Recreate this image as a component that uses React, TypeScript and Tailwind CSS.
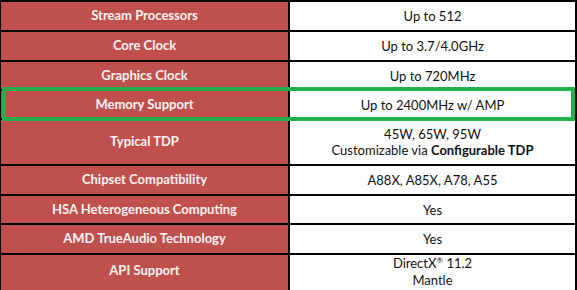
const rows: { label: string; value: React.ReactNode; h: string }[] = [
  { label: "Stream Processors", value: "Up to 512", h: "h-[30px]" },
  { label: "Core Clock", value: "Up to 3.7/4.0GHz", h: "h-[30px]" },
  { label: "Graphics Clock", value: "Up to 720MHz", h: "h-[29px]" },
  { label: "Memory Support", value: "Up to 2400MHz w/ AMP", h: "h-[29px]" },
  {
    label: "Typical TDP",
    value: (
      <>
        <div>45W, 65W, 95W</div>
        <div>
          Customizable via <span className="font-bold">Configurable TDP</span>
        </div>
      </>
    ),
    h: "h-[46px]",
  },
  { label: "Chipset Compatibility", value: "A88X, A85X, A78, A55", h: "h-[30px]" },
  { label: "HSA Heterogeneous Computing", value: "Yes", h: "h-[29px]" },
  { label: "AMD TrueAudio Technology", value: "Yes", h: "h-[30px]" },
];

export default function App() {
  return (
    <div className="relative w-[577px] h-[290px] overflow-hidden bg-white font-['Lato',sans-serif] text-[13px]">
      <div className="w-[577px] border-t-2 border-l border-r-2 border-black">
        {rows.map((r) => (
          <div key={r.label} className={`flex border-b-2 border-black ${r.h}`}>
            <div className="w-[287px] flex items-center justify-center bg-[#c0504d] text-[#fdf3f2] font-bold">
              {r.label}
            </div>
            <div className="w-[2px] bg-black" />
            <div className="flex-1 flex flex-col items-center justify-center text-[#111] leading-[16px] text-center">
              {r.value}
            </div>
          </div>
        ))}
        <div className="flex h-[40px]">
          <div className="w-[287px] flex justify-center pt-[7px] leading-[17px] bg-[#c0504d] text-[#fdf3f2] font-bold">
            API Support
          </div>
          <div className="w-[2px] bg-black" />
          <div className="flex-1 flex flex-col items-center leading-[17px] text-[#111]">
            <div>
              DirectX
              <span className="inline-block text-[8px] leading-none -translate-y-[5px]">®</span> 11.2
            </div>
            <div>Mantle</div>
          </div>
        </div>
      </div>
      <div className="absolute left-[2px] top-[87px] w-[573px] h-[34px] border-[4px] border-[#22b04b]" />
    </div>
  );
}
